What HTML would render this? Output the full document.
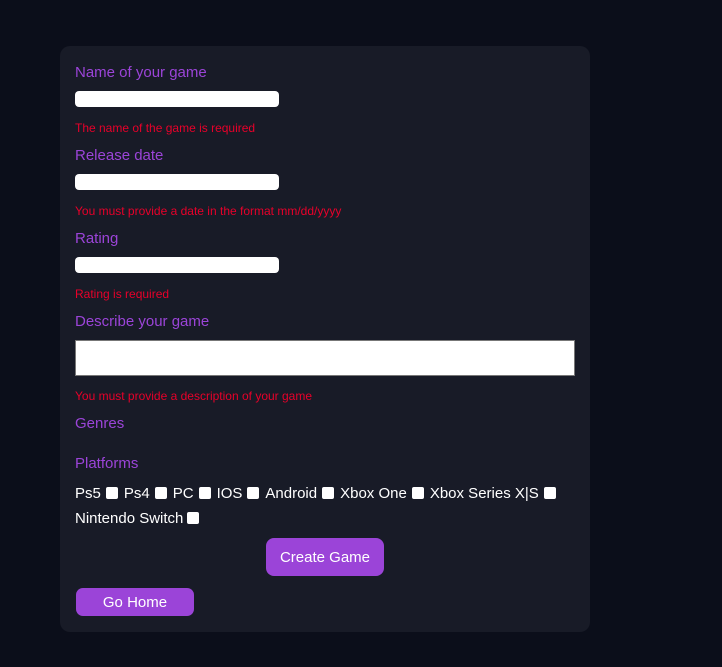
<!DOCTYPE html>
<html><head><style>
body{margin:0;width:722px;height:667px;background:#0b0e1a;font-family:"Liberation Sans",sans-serif;position:relative;overflow:hidden}
.card{position:absolute;left:60px;top:46px;width:530px;height:586px;background:#181b27;border-radius:10px}
.a{position:absolute;white-space:nowrap}
.l{color:#9b44d8;font-size:15px;left:75px}
.e{color:#e8002a;font-size:12px;left:75px}
.in{position:absolute;left:75px;width:204px;height:16px;background:#fff;border-radius:4px}
.w{color:#fff;font-size:15px}
.cb{display:inline-block;width:12px;height:12px;background:#fff;border-radius:2px;vertical-align:-1px;margin:0 6px 0 5px}
.btn{position:absolute;background:#9b44d8;color:#fff;font-size:15px;text-align:center}
</style></head><body>
<div class="card"></div>
<div class="a l" style="top:64px">Name of your game</div>
<div class="in" style="top:91px"></div>
<div class="a e" style="top:121px">The name of the game is required</div>
<div class="a l" style="top:147px">Release date</div>
<div class="in" style="top:174px"></div>
<div class="a e" style="top:204px">You must provide a date in the format mm/dd/yyyy</div>
<div class="a l" style="top:230px">Rating</div>
<div class="in" style="top:257px"></div>
<div class="a e" style="top:287px">Rating is required</div>
<div class="a l" style="top:313px">Describe your game</div>
<div class="a" style="left:75px;top:340px;width:498px;height:34px;background:#fff;border:1px solid #777"></div>
<div class="a e" style="top:389px">You must provide a description of your game</div>
<div class="a l" style="top:415px">Genres</div>
<div class="a l" style="top:455px">Platforms</div>
<div class="a w" style="left:75px;top:485px">Ps5<span class="cb"></span>Ps4<span class="cb"></span>PC<span class="cb"></span>IOS<span class="cb"></span>Android<span class="cb"></span>Xbox One<span class="cb"></span>Xbox Series X|S<span class="cb"></span></div>
<div class="a w" style="left:75px;top:510px">Nintendo Switch<span class="cb" style="margin-left:4px"></span></div>
<div class="btn" style="left:266px;top:538px;width:118px;height:38px;line-height:40px;border-radius:8px">Create Game</div>
<div class="btn" style="left:76px;top:588px;width:118px;height:28px;line-height:30px;border-radius:7px">Go Home</div>
</body></html>
